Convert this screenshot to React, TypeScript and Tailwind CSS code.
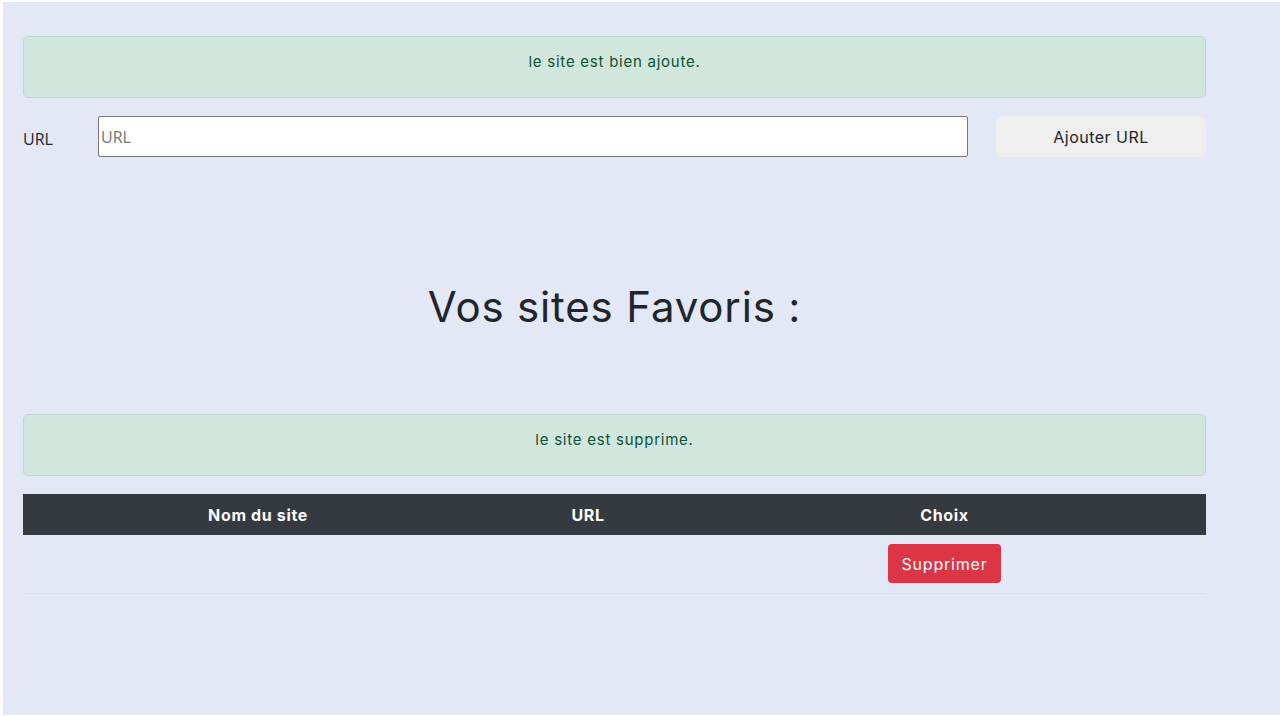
const poppins = { fontFamily: 'Inter, "Noto Sans", sans-serif' };

function Alert({ children }: { children: React.ReactNode }) {
  return (
    <div className="h-[62px] rounded-[5px] border border-[#badbcc] bg-[#d1e7dd] pt-[14px] text-center text-[15px] leading-[22px] tracking-[0.05em] text-[#0f5132]">
      {children}
    </div>
  );
}

export default function App() {
  return (
    <div className="h-[717px] bg-white pl-[3px] pt-[2px] pb-[2px]" style={poppins}>
      <div className="h-full bg-[#e2e8f5] pl-[20px] pt-[34px]">
        <div className="w-[1183px]">
          <Alert>le site est bien ajoute.</Alert>

          <div className="mt-[18px] flex items-center">
            <label
              className="w-[75px] pt-[5px] text-[16px] text-[#212529]"
              style={{ fontFamily: '"Open Sans", sans-serif' }}
            >
              URL
            </label>
            <input
              placeholder="URL"
              className="h-[41px] w-[870px] rounded-[2px] border border-[#767676] bg-white px-[2px] text-[16px] placeholder:text-[#757575] outline-none"
              style={{ fontFamily: '"Open Sans", sans-serif' }}
            />
            <button className="ml-[28px] h-[41px] w-[210px] rounded-[8px] bg-[#efefef] text-[16px] tracking-[0.03em] text-[#212529]">
              Ajouter URL
            </button>
          </div>

          <h1 className="mt-[124px] text-center text-[42px] font-normal leading-[52px] tracking-[0.02em] text-[#212529]">
            Vos sites Favoris :
          </h1>

          <div className="mt-[81px]">
            <Alert>le site est supprime.</Alert>
          </div>

          <table className="mt-[18px] w-full border-collapse">
            <thead>
              <tr className="h-[41px] bg-[#343a40] text-[16px] font-extrabold tracking-[0.04em] text-white">
                <th className="w-[470px]">Nom du site</th>
                <th className="w-[190px]">URL</th>
                <th>Choix</th>
              </tr>
            </thead>
            <tbody>
              <tr className="h-[58px] border-b border-[#d9dfe8]">
                <td></td>
                <td></td>
                <td className="text-center">
                  <button className="h-[39px] rounded-[4px] bg-[#dc3545] px-[13px] text-[16px] tracking-[0.05em] text-white">
                    Supprimer
                  </button>
                </td>
              </tr>
            </tbody>
          </table>
        </div>
      </div>
    </div>
  );
}
